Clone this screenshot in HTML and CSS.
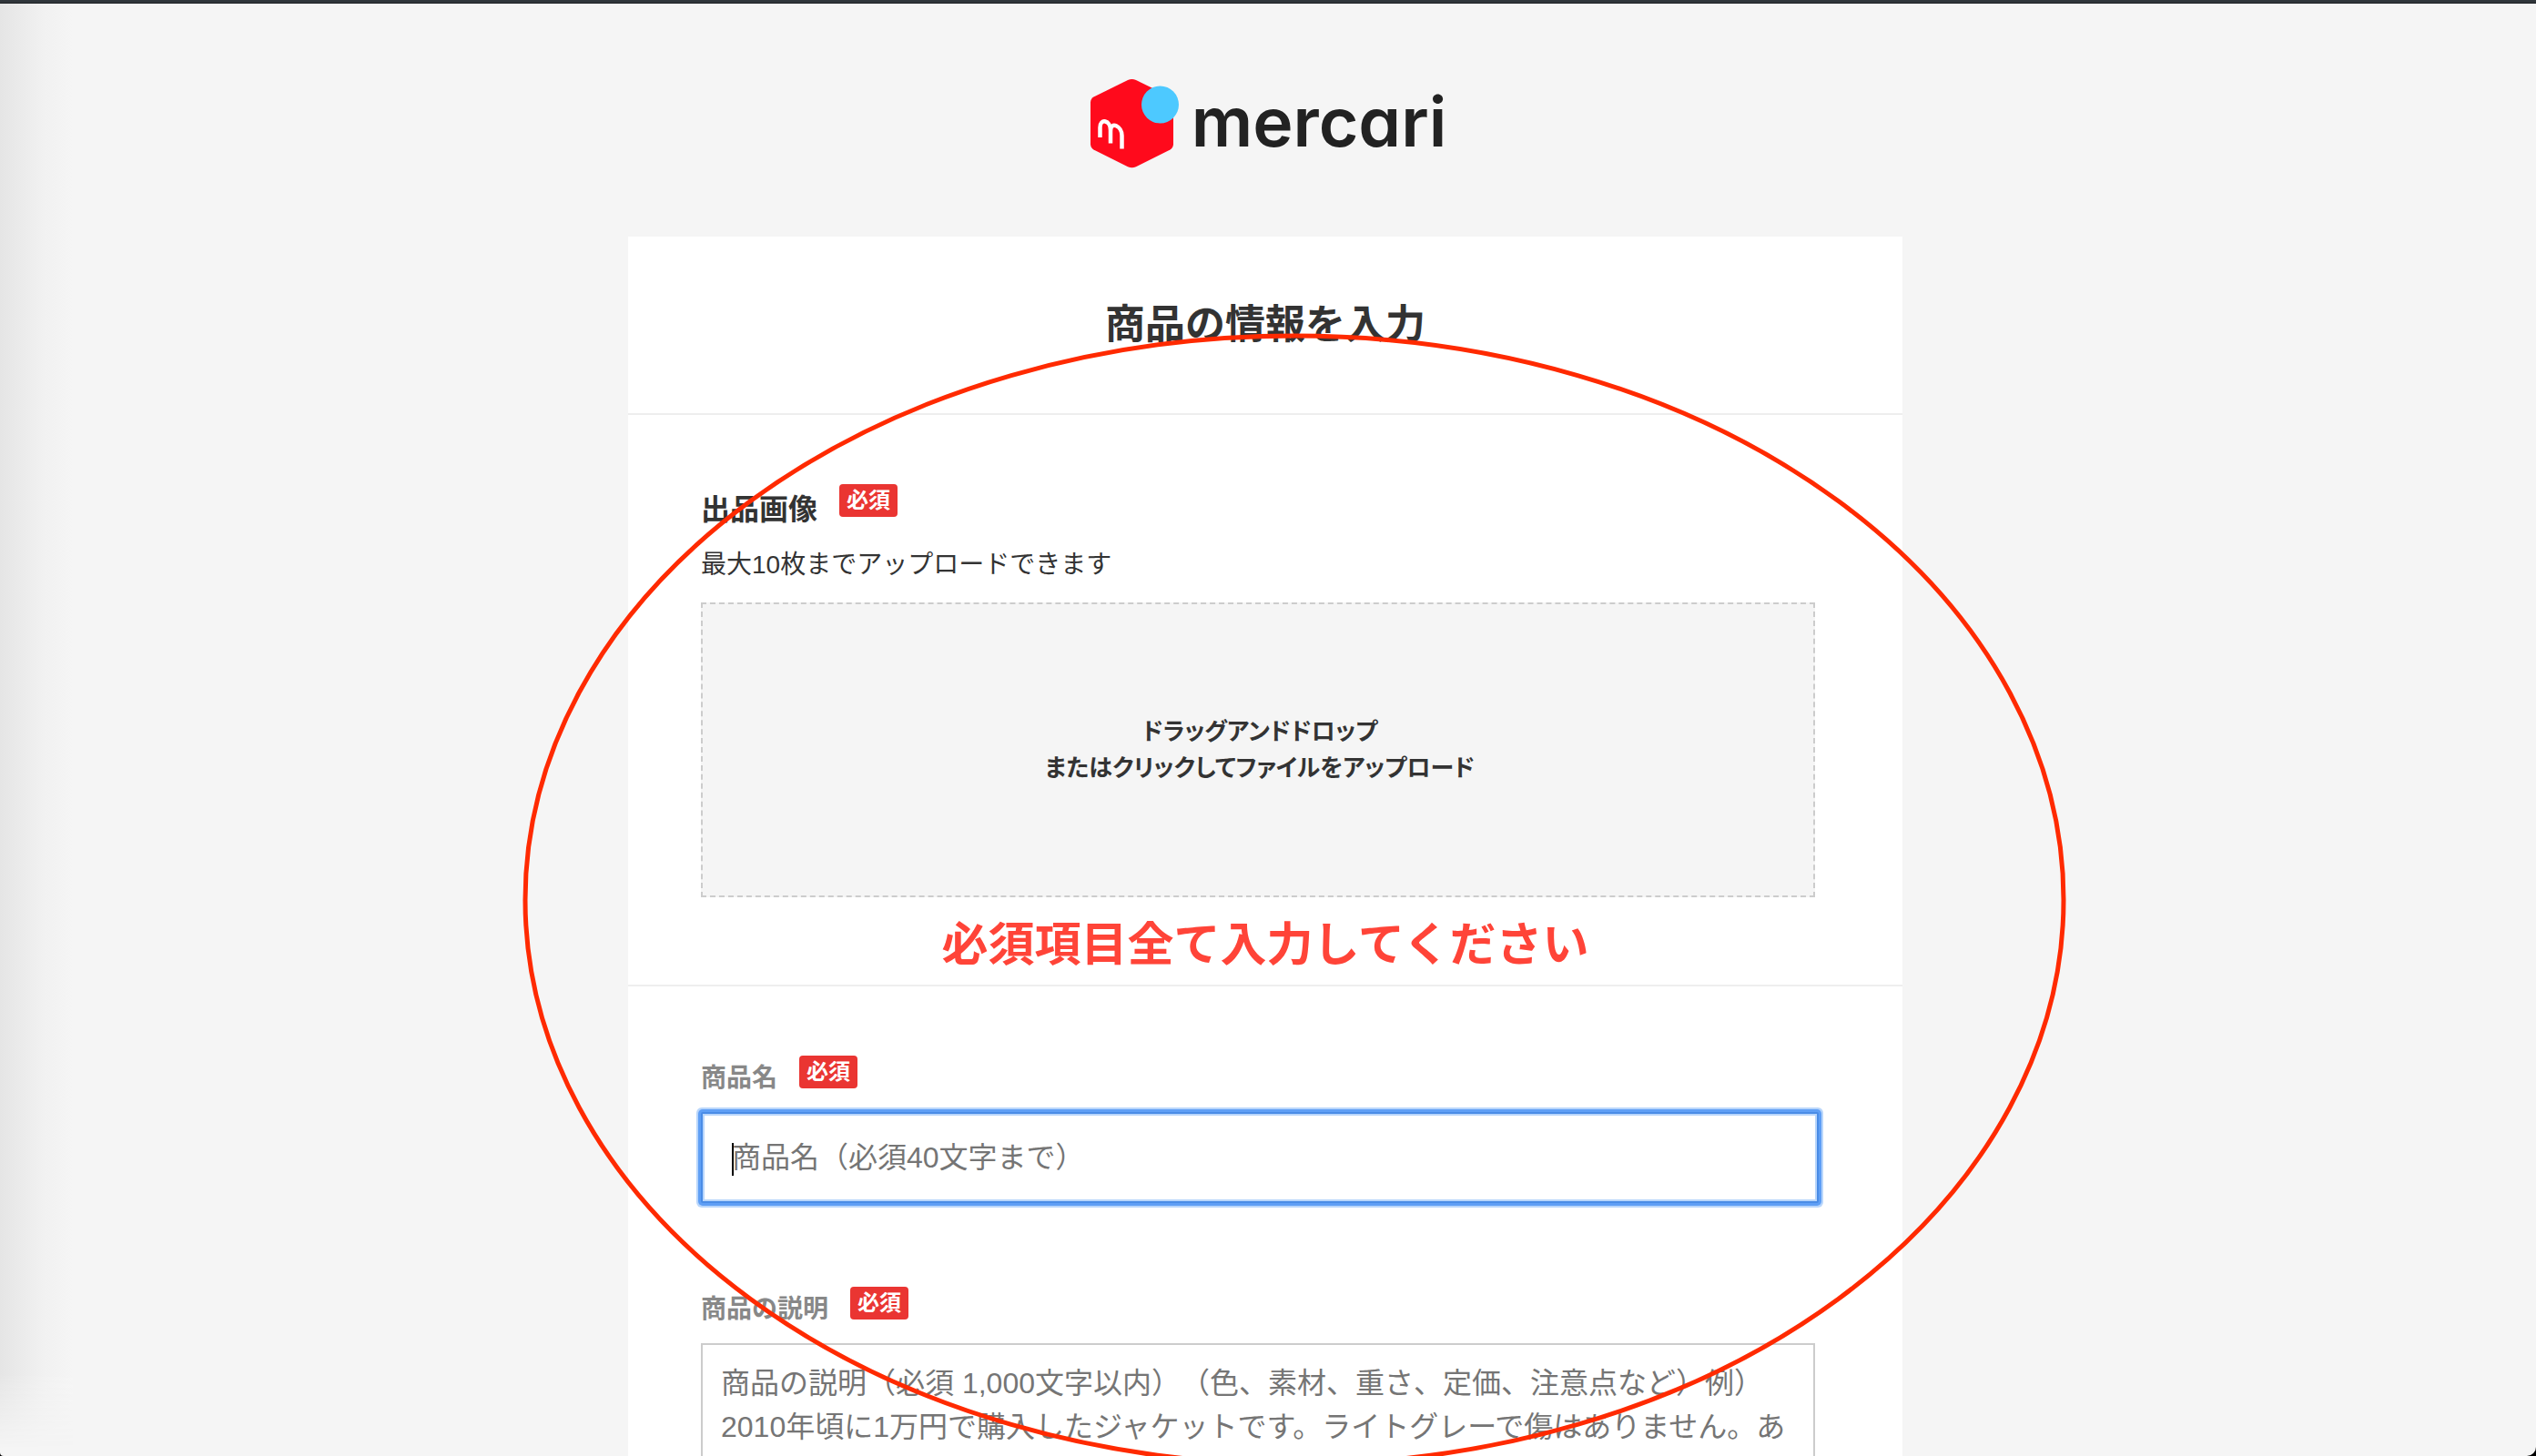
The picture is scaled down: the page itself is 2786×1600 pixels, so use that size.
FILE: index.html
```html
<!DOCTYPE html>
<html lang="ja">
<head>
<meta charset="utf-8">
<title>商品の情報を入力</title>
<link rel="stylesheet" href="styles.css">
</head>
<body>
<div class="page">
  <div class="topbar"></div>
  <header class="header">
    <a class="logo" href="#">
      <svg class="logo-mark" width="100" height="100" viewBox="0 0 100 100" aria-hidden="true">
        <path fill="#ff0a1c" d="M42 1.9Q46.500 0 51 1.900L88.500 20.600Q91.800 22.600 92 26.500V72.500Q91.800 76.500 88.500 78.400L51 97.200Q46.500 99.200 42 97.200L4.500 78.400Q1.200 76.500 1 72.500V26.500Q1.200 22.600 4.500 20.600Z"/>
        <circle cx="77.500" cy="29" r="20.500" fill="#4dc9ff"/>
        <path fill="none" stroke="#fff" stroke-width="4.500" d="M11.500 65V54C11.500 43.500 23 46 23 57V71.500M23 58C23 46.500 35.500 52.500 35.500 63V77.500"/>
      </svg>
      <span class="logo-text">mercari</span>
    </a>
  </header>

  <main class="card">
    <h1 class="title">商品の情報を入力</h1>

    <section class="section">
      <div class="row">
        <h2 class="heading">出品画像</h2>
        <span class="badge">必須</span>
      </div>
      <p class="lead">最大10枚までアップロードできます</p>
      <label class="drop">
        <input class="drop-input" type="file" multiple>
        <span>ドラッグアンドドロップ</span>
        <span>またはクリックしてファイルをアップロード</span>
      </label>
      <p class="note">必須項目全て入力してください</p>
    </section>

    <section class="section">
      <div class="row">
        <label class="label" for="name">商品名</label>
        <span class="badge">必須</span>
      </div>
      <div class="field">
        <input class="text" id="name" type="text" placeholder="商品名（必須40文字まで）">
        <span class="caret"></span>
      </div>
      <div class="row">
        <label class="label" for="description">商品の説明</label>
        <span class="badge">必須</span>
      </div>
      <textarea class="area" id="description" rows="7" placeholder="商品の説明（必須 1,000文字以内）（色、素材、重さ、定価、注意点など）例）2010年頃に1万円で購入したジャケットです。ライトグレーで傷はありません。あ"></textarea>
    </section>

    <svg class="circle" width="1698" height="1246" viewBox="0 0 1698 1246" aria-hidden="true">
      <ellipse cx="848" cy="623" rx="845" ry="620" fill="none" stroke="#ff2a00" stroke-width="5"/>
    </svg>
  </main>
</div>
</body>
</html>
```

FILE: styles.css
```css
* {
  box-sizing: border-box;
}

body {
  margin: 0;
  background: #000;
  color: #333;
  font-family: "Liberation Sans", "Noto Sans CJK JP", sans-serif;
  text-spacing-trim: space-all;
}

.page {
  position: relative;
  height: 100vh;
  overflow: hidden;
  padding-right: 6px;
  background: #f5f5f5;
  border-radius: 0 0 10px 4px;
}

/* soft shadow cast over the left edge of the window */
.page::before {
  content: "";
  position: absolute;
  top: 0;
  left: 0;
  bottom: 0;
  width: 80px;
  background: linear-gradient(to right, #e5e5e5, #eaeaea 20px, #f1f1f1 48px, #f5f5f5);
  mask-image: linear-gradient(to top, transparent 8px, #000 90px);
}

.topbar {
  position: relative;
  height: 4px;
  margin-right: -6px;
  background: linear-gradient(#30363b 2px, #212427);
}

.header {
  display: flex;
  justify-content: center;
  padding: 82px 0 74px 6px;
}

.logo {
  display: flex;
  gap: 12px;
  color: #222;
  text-decoration: none;
}

.logo-mark {
  width: 100px;
  height: 100px;
}

.logo-text {
  font-family: Inter, sans-serif;
  font-feature-settings: "cv11";
  font-size: 75px;
  font-weight: 600;
  line-height: 96px;
}

.card {
  position: relative;
  max-width: 1400px;
  margin: 0 auto;
  background: #fff;
}

.title {
  margin: 0;
  padding: 64px 0;
  font-size: 44px;
  font-weight: 700;
  line-height: 66px;
  text-align: center;
}

.section {
  padding: 76px 96px 0 80px;
  border-top: 2px solid #eee;
}

.row {
  display: flex;
  align-items: flex-start;
  gap: 24px;
}

.heading {
  margin: 0;
  font-size: 32px;
  font-weight: 700;
  line-height: 56px;
}

.label {
  color: #888;
  font-size: 28px;
  font-weight: 700;
  line-height: 50px;
}

.badge {
  padding: 0 8px;
  border-radius: 4px;
  background: #ea3532;
  color: #fff;
  font-size: 24px;
  font-weight: 700;
  line-height: 36px;
}

.lead {
  margin: 12px 0 20px;
  font-size: 28px;
  line-height: 42px;
}

.drop {
  display: flex;
  flex-direction: column;
  align-items: center;
  justify-content: center;
  height: 324px;
  padding-left: 4px;
  border: 2px dashed #ccc;
  background: #f5f5f5;
  font-size: 26px;
  font-weight: 700;
  line-height: 40px;
  font-feature-settings: "palt";
}

.drop-input {
  position: absolute;
  width: 1px;
  height: 1px;
  opacity: 0;
}

.note {
  margin: 0 0 0 16px;
  padding-top: 10px;
  color: #ff4438;
  font-size: 51px;
  font-weight: 700;
  line-height: 86px;
  text-align: center;
}

.field {
  position: relative;
  margin: 12px -4px 92px 0;
}

.text {
  display: block;
  width: 100%;
  height: 100px;
  padding: 0 32px;
  border: 2px solid #4a8ce6;
  border-radius: 2px;
  outline: none;
  background: #fff;
  box-shadow: 0 0 0 3px #5f9ff5, 0 0 0 5px #b9d6fb, inset 0 0 0 2px #b9d6fb;
  color: #333;
  font: inherit;
  font-size: 32px;
}

.caret {
  position: absolute;
  top: 34px;
  left: 34px;
  width: 2px;
  height: 36px;
  background: #000;
}

.area {
  display: block;
  width: 100%;
  margin-top: 12px;
  padding: 18px 20px;
  border: 2px solid #ccc;
  background: #fff;
  color: #333;
  font: inherit;
  font-size: 32px;
  line-height: 48px;
  resize: none;
}

.text::placeholder,
.area::placeholder {
  color: #757575;
}

/* hand-drawn marker around the form */
.circle {
  position: absolute;
  top: 106px;
  left: -116px;
  pointer-events: none;
}
```
